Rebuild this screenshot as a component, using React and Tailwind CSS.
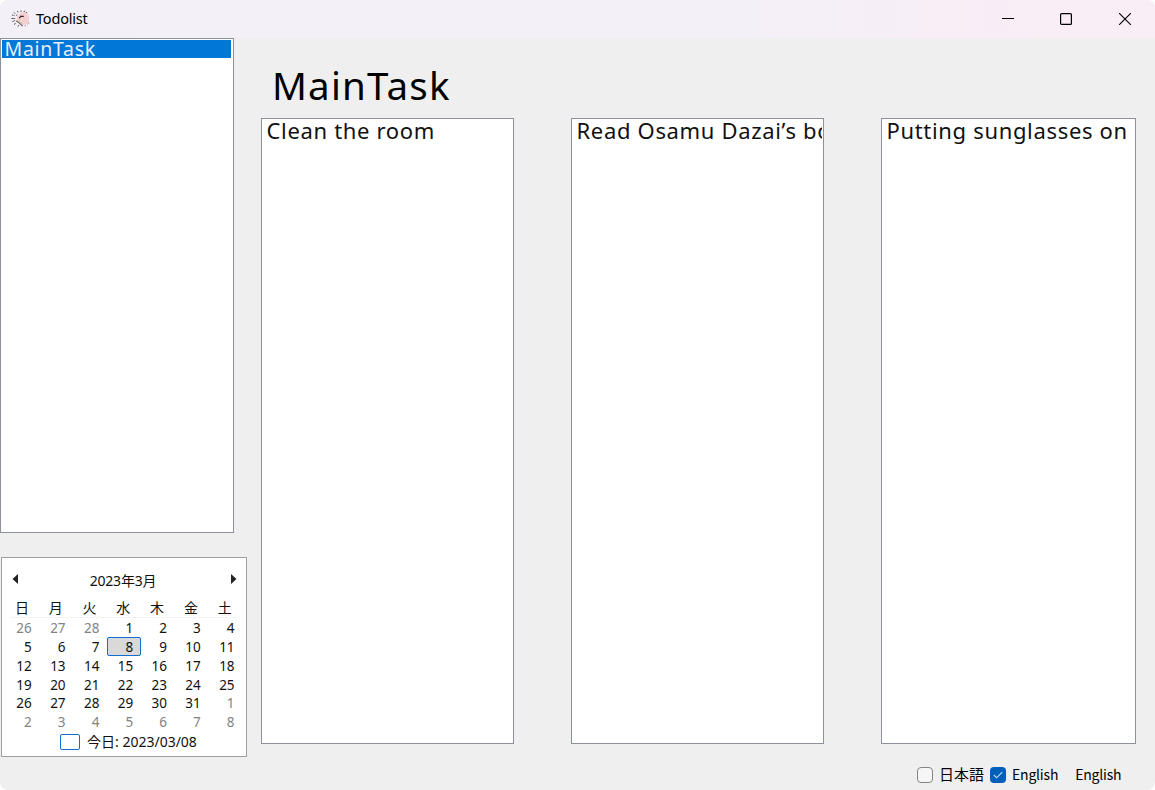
import React from 'react';

const weekdays = ['日', '月', '火', '水', '木', '金', '土'];
const days = [
  26, 27, 28, 1, 2, 3, 4,
  5, 6, 7, 8, 9, 10, 11,
  12, 13, 14, 15, 16, 17, 18,
  19, 20, 21, 22, 23, 24, 25,
  26, 27, 28, 29, 30, 31, 1,
  2, 3, 4, 5, 6, 7, 8,
];
const FIRST = 3;
const LAST = 33;
const TODAY = 10;

function AppIcon() {
  return (
    <svg width="20" height="18" viewBox="0 0 20 18" fill="none">
      <path d="M8 5 C9 2.5 13 1 15.5 3 C18.5 5 18.8 10 17 12.5 C15.5 14.5 12.5 15.5 11.5 14.5 L9.5 11 L6 9 C5.5 7 6.5 5.5 8 5Z" fill="#f3cfd1" />
      <path d="M5 11 L8 12.5 L11.5 16" stroke="#6d6058" strokeWidth="1.3" />
      <path d="M5.5 10.3 L8 10.8 L11 14" stroke="#d9c6ad" strokeWidth="1.5" />
      <path d="M9 6.4 L12.8 6.4 M8 8 L9.5 7" stroke="#3b2528" strokeWidth="1.1" />
      <path d="M1 5 L3.5 5.5 M0.5 8.5 L4.5 8.5 M3 2.5 L4.5 4 M6.5 1 L7.2 2.8 M10 .5 L10 1.8 M13.5 .8 L13 2 M16 2 L15.3 3 M1.5 11.5 L4 10.5 M3 14.5 L5 13 M7 16.5 L7.8 14.8 M5.2 5.5 L6.5 4.5" stroke="#453a42" strokeWidth="1" strokeDasharray="1.4 .5" />
      <path d="M16.5 14.5 L18 12.5 M13.5 16 L15 15.5" stroke="#a98a8e" />
    </svg>
  );
}

function TitleBar() {
  return (
    <header className="flex h-[38px] shrink-0 items-center bg-linear-to-r from-[#f3f0f8] from-60% to-[#f9edf6] to-90% pb-px pl-[11px]">
      <AppIcon />
      <span className="-mt-0.5 ml-[5px] font-['Noto_Sans','Noto_Sans_CJK_JP',sans-serif] text-[14.5px] leading-5 tracking-[-0.2px] text-black">Todolist</span>
      <div className="ml-auto flex items-center pr-[24px] pt-px">
        <svg className="mr-[46px]" width="12" height="12" viewBox="0 0 12 12" stroke="#000"><path d="M0 5.5H12" /></svg>
        <svg className="mr-[47px]" width="12" height="12" viewBox="0 0 12 12" fill="none" stroke="#000" strokeWidth="1.2"><rect x=".6" y=".6" width="10.8" height="10.8" rx="1" /></svg>
        <svg width="12" height="12" viewBox="0 0 12 12" stroke="#000" strokeWidth="1.1"><path d="M0 0L12 12M12 0L0 12" /></svg>
      </div>
    </header>
  );
}

function Calendar() {
  return (
    <section className="ml-px mt-6 h-[200px] w-[246px] border border-[#a0a0a0] bg-white px-[5px] pt-[12px] font-['Noto_Sans','Noto_Sans_CJK_JP',sans-serif] text-[13.5px] text-[#111]">
      <div className="flex h-5 items-center justify-between pl-[5px] pr-1">
        <svg className="-mt-0.5" width="6" height="10" viewBox="0 0 6 10" fill="#222"><path d="M6 0V10L0.5 5Z" /></svg>
        <span className="-ml-[3px] text-[14px] tracking-[-0.2px]">2023年3月</span>
        <svg className="-mt-0.5" width="6" height="10" viewBox="0 0 6 10" fill="#222"><path d="M0 0V10L5.5 5Z" /></svg>
      </div>
      <div className="mx-[3px] mt-[7px] h-[21px] border-b border-[#f3f3f3] text-[14px] leading-[21px]">
        <div className="-ml-[2px] grid grid-cols-[repeat(7,33.8px)]">
          {weekdays.map((d) => <span key={d} className="-ml-[6px] text-center">{d}</span>)}
        </div>
      </div>
      <div className="-ml-px grid grid-cols-[repeat(7,33.8px)] auto-rows-[18.8px]">
        {days.map((d, i) => (
          <span
            key={i}
            className={
              'flex items-center justify-end pt-[2px] pr-[8px] ' +
              (i < FIRST || i > LAST ? 'text-[#838383] ' : '') +
              (i === TODAY ? 'rounded-[2px] border border-[#0f6fd0] bg-[#d9d9d9] !pr-[7px]' : '')
            }
          >
            {d}
          </span>
        ))}
      </div>
      <div className="flex h-5 items-center pl-[53px] pt-[2px]">
        <span className="h-4 w-5 rounded-[2px] border border-[#0f6fd0]" />
        <span className="ml-[7px] text-[14px]">今日: 2023/03/08</span>
      </div>
    </section>
  );
}

function TaskPanel({ text, width }) {
  return (
    <div className={`h-[626px] whitespace-nowrap border border-[#8d919b] bg-white pl-[4.5px] pr-px font-['Noto_Sans',sans-serif] text-[22px] tracking-[0.67px] text-[#111] ${width}`}>
      <div className="overflow-x-clip leading-[22px]">{text}</div>
    </div>
  );
}

export default function App() {
  return (
    <div className="flex h-[790px] w-[1155px] flex-col overflow-hidden rounded-[8px] bg-[#efefef] font-['Noto_Sans_CJK_JP',sans-serif]">
      <TitleBar />
      <main className="flex min-h-0 flex-1">
        <aside className="w-[261px] shrink-0">
          <div className="h-[495px] w-[234px] border border-[#8d919b] bg-white py-px pl-px pr-[2px]">
            <div className="h-[18px] bg-[#0078d7] pl-[2.5px] font-['Noto_Sans',sans-serif] text-[19.5px] leading-[17px] tracking-[0.7px] text-[#e6eefa]">MainTask</div>
          </div>
          <Calendar />
        </aside>
        <div className="flex flex-1 flex-col">
          <h1 className="h-20 pl-[11px] pt-[19px] font-['Noto_Sans',sans-serif] text-[38.5px] leading-[56px] tracking-[1.2px] text-black">MainTask</h1>
          <div className="flex gap-[57px]">
            <TaskPanel text="Clean the room" width="w-[253px]" />
            <TaskPanel text="Read Osamu Dazai’s book" width="w-[253px]" />
            <TaskPanel text="Putting sunglasses on" width="w-[255px]" />
          </div>
          <footer className="mt-[21px] flex h-5 items-center pl-[656px] text-[15px] leading-5 text-black">
            <span className="h-4 w-4 rounded-[4px] border border-[#858585] bg-[#f6f6f6]" />
            <span className="-mt-0.5 ml-[6px]">日本語</span>
            <span className="ml-[6px] flex h-4 w-4 items-center justify-center rounded-[4px] bg-[#005fb8]">
              <svg width="10" height="8" viewBox="0 0 10 8" fill="none" stroke="#cfe2f5" strokeWidth="1.1"><path d="M.8 4L3.6 6.8L9.2 1.2" /></svg>
            </span>
            <span className="-mt-0.5 ml-[6px] text-[14px] tracking-[-0.2px]">English</span>
            <span className="-mt-0.5 ml-[17px] text-[14px] tracking-[-0.2px]">English</span>
          </footer>
        </div>
      </main>
    </div>
  );
}
